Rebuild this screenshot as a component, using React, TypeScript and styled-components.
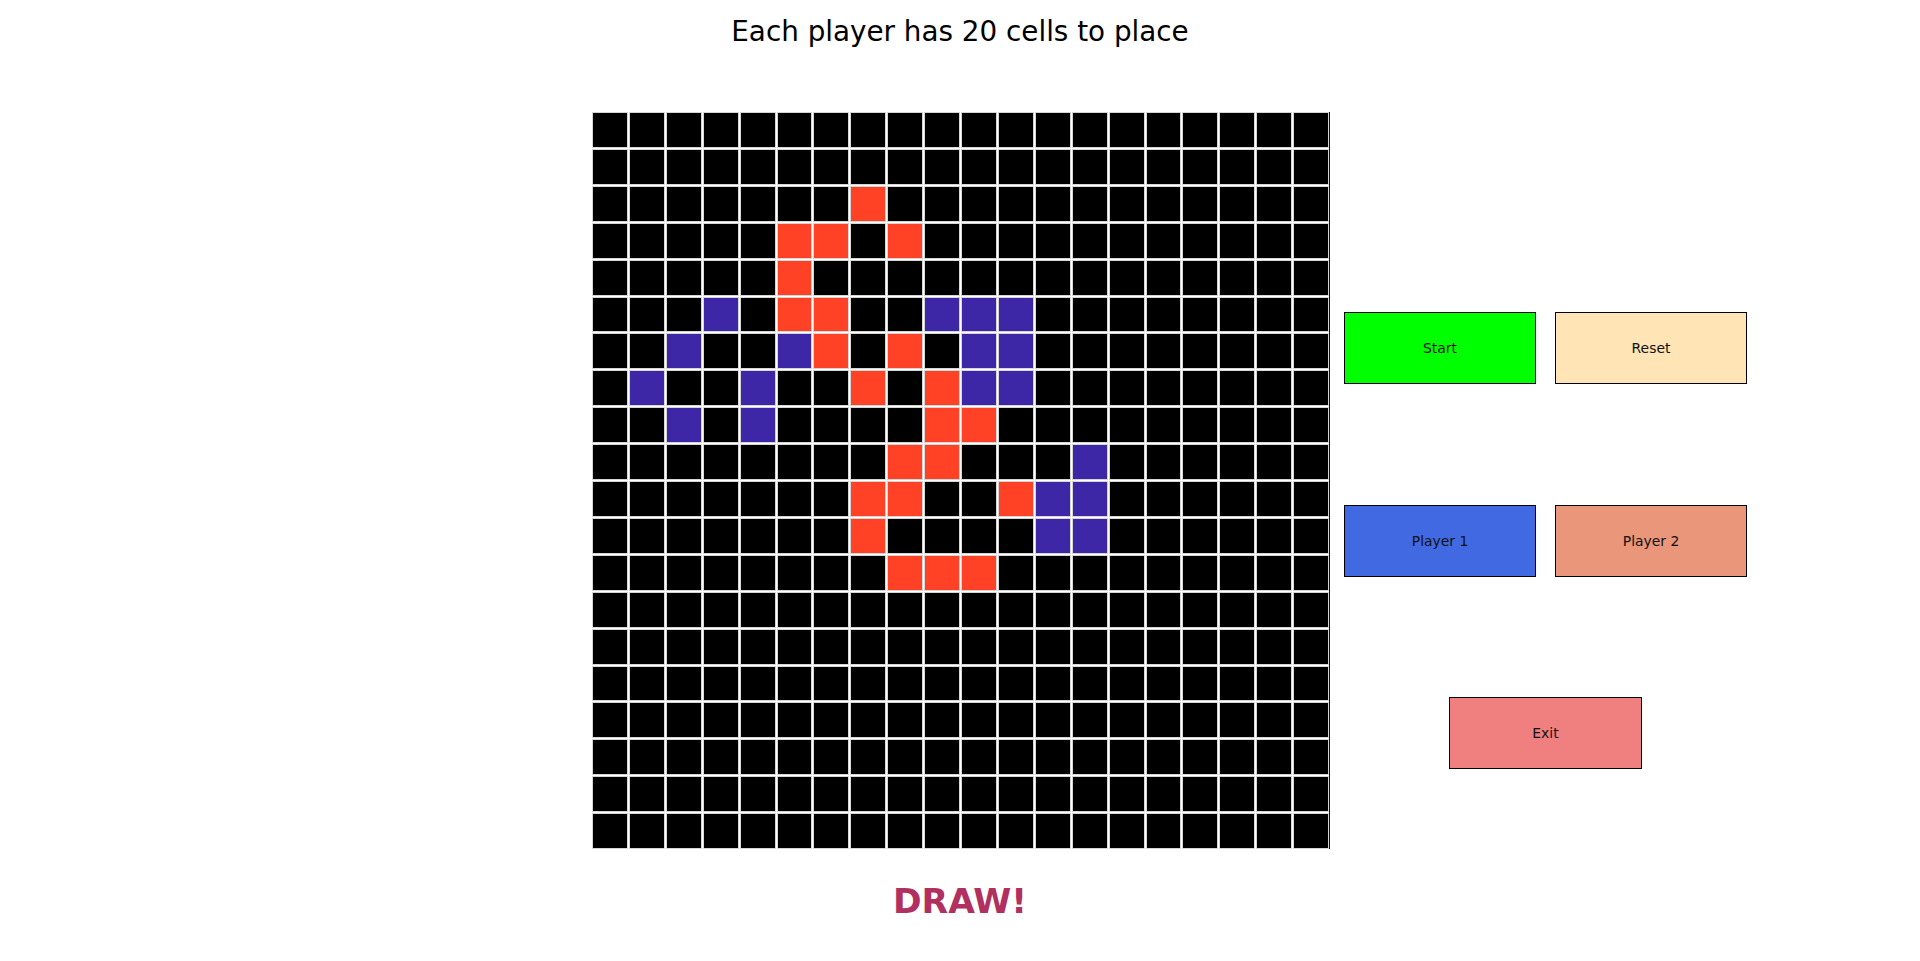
import styled, { createGlobalStyle } from 'styled-components';

const GlobalStyle = createGlobalStyle`
  html, body {
    margin: 0;
    padding: 0;
    background: #ffffff;
  }
  body {
    font-family: "DejaVu Sans", "Liberation Sans", sans-serif;
  }
`;

const Page = styled.div`
  width: 1920px;
  height: 961px;
  display: flex;
  flex-direction: column;
  overflow: hidden;
`;

const Title = styled.h1`
  margin: 15px 0 0;
  text-align: center;
  font-size: 27.8px;
  font-weight: normal;
  line-height: 33px;
  color: #000;
`;

const Main = styled.div`
  display: flex;
  align-items: flex-start;
  gap: 13.5px;
  margin: 64px 0 0 592px;
`;

const Board = styled.div`
  width: 737px;
  height: 737px;
  display: grid;
  grid-template-columns: repeat(20, 1fr);
  grid-template-rows: repeat(20, 1fr);
  gap: 1px;
  background: #ffffff;
  border-right: 1px solid #111;
`;

const Cell = styled.div<{ $owner: number }>`
  box-sizing: border-box;
  border: 1px solid #d6d6d6;
  background: ${(p) => (p.$owner === 1 ? '#3d27a6' : p.$owner === 2 ? '#ff4125' : '#000')};
`;

const Panel = styled.div`
  width: 404px;
  padding-top: 200px;
  display: flex;
  flex-direction: column;
  align-items: center;
  gap: 120.5px;
`;

const ButtonRow = styled.div`
  display: flex;
  gap: 18.5px;
`;

const Button = styled.button<{ $bg: string }>`
  box-sizing: border-box;
  width: 192.5px;
  height: 72px;
  margin: 0;
  padding: 0;
  border: 1px solid #000;
  border-radius: 0;
  background: ${(p) => p.$bg};
  color: #111;
  font-family: "DejaVu Sans", "Liberation Sans", sans-serif;
  font-size: 13.9px;
  cursor: pointer;
`;

const Result = styled.div`
  margin-top: 30.5px;
  text-align: center;
  font-size: 34.5px;
  font-weight: bold;
  line-height: 42px;
  color: #b03060;
`;

// 1 = player one (purple), 2 = player two (red)
const LIVE: [number, number, number][] = [
  [2, 7, 2],
  [3, 5, 2], [3, 6, 2], [3, 8, 2],
  [4, 5, 2],
  [5, 3, 1], [5, 5, 2], [5, 6, 2], [5, 9, 1], [5, 10, 1], [5, 11, 1],
  [6, 2, 1], [6, 5, 1], [6, 6, 2], [6, 8, 2], [6, 10, 1], [6, 11, 1],
  [7, 1, 1], [7, 4, 1], [7, 7, 2], [7, 9, 2], [7, 10, 1], [7, 11, 1],
  [8, 2, 1], [8, 4, 1], [8, 9, 2], [8, 10, 2],
  [9, 8, 2], [9, 9, 2], [9, 13, 1],
  [10, 7, 2], [10, 8, 2], [10, 11, 2], [10, 12, 1], [10, 13, 1],
  [11, 7, 2], [11, 12, 1], [11, 13, 1],
  [12, 8, 2], [12, 9, 2], [12, 10, 2],
];

const SIZE = 20;

const App = () => {
  const cells: number[] = new Array(SIZE * SIZE).fill(0);
  LIVE.forEach(([r, c, owner]) => {
    cells[r * SIZE + c] = owner;
  });

  return (
    <Page>
      <GlobalStyle />
      <Title>Each player has 20 cells to place</Title>
      <Main>
        <Board>
          {cells.map((owner, i) => (
            <Cell key={i} $owner={owner} />
          ))}
        </Board>
        <Panel>
          <ButtonRow>
            <Button $bg="#00ff00">Start</Button>
            <Button $bg="#ffe4b5">Reset</Button>
          </ButtonRow>
          <ButtonRow>
            <Button $bg="#4169e1">Player 1</Button>
            <Button $bg="#e9967a">Player 2</Button>
          </ButtonRow>
          <Button $bg="#f08080">Exit</Button>
        </Panel>
      </Main>
      <Result>DRAW!</Result>
    </Page>
  );
};

export default App;
